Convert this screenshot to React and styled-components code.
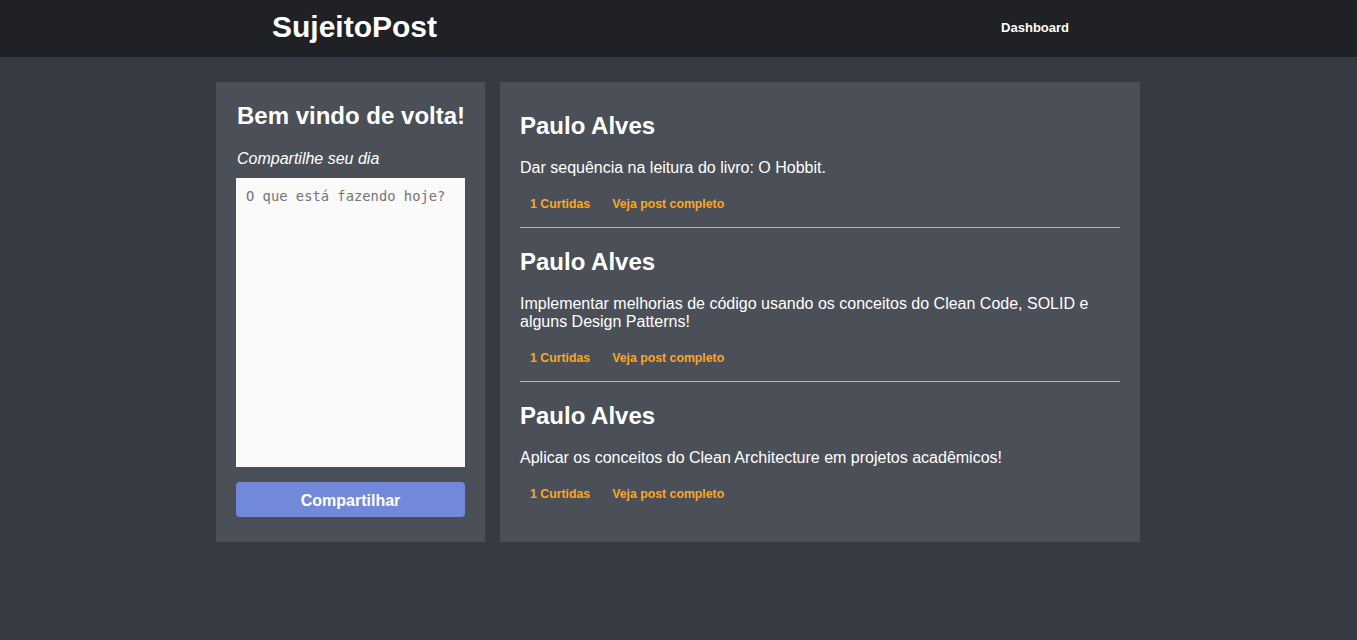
import React from 'react';
import styled, { createGlobalStyle } from 'styled-components';

const GlobalStyle = createGlobalStyle`
  * { box-sizing: border-box; }
  html, body { margin: 0; padding: 0; }
  body {
    background: #373a42;
    font-family: "Liberation Sans", Arial, sans-serif;
    color: #fff;
  }
`;

const Header = styled.header`
  height: 57px;
  background: #202124;
  display: flex;
  justify-content: center;
`;

const HeaderInner = styled.div`
  width: 813px;
  display: flex;
  align-items: center;
  justify-content: space-between;
  padding-bottom: 3px;
`;

const Logo = styled.a`
  font-size: 30px;
  font-weight: bold;
  color: #fff;
  text-decoration: none;
  line-height: 34px;
`;

const NavLink = styled.a`
  font-size: 13px;
  font-weight: bold;
  color: #fff;
  text-decoration: none;
  padding: 2px 16px 0;
  line-height: 16px;
`;

const Main = styled.main`
  display: grid;
  grid-template-columns: 269px 640px;
  gap: 15px;
  justify-content: center;
  margin-top: 25px;
  padding-right: 1px;
`;

const Panel = styled.section`
  background: #4b4f58;
  padding: ${p => p.$pad};
  display: flex;
  flex-direction: column;
`;

const Title = styled.h1`
  margin: 0;
  font-size: 24px;
  line-height: 24px;
  font-weight: bold;
  white-space: nowrap;
  padding-left: 1px;
`;

const Subtitle = styled.p`
  margin: 22px 0 0;
  font-size: 16px;
  font-style: italic;
  padding-left: 1px;
`;

const TextArea = styled.textarea`
  margin-top: 10px;
  height: 289px;
  width: 100%;
  border: none;
  outline: none;
  resize: none;
  background: #fafafa;
  padding: 10px;
  font-family: "DejaVu Sans Mono", monospace;
  font-size: 13.8px;
  color: #333;
  &::placeholder { color: #757575; }
`;

const Button = styled.button`
  margin-top: 15px;
  height: 35px;
  border: none;
  border-radius: 4px;
  background: #7289da;
  color: #fff;
  font-family: "Liberation Sans", Arial, sans-serif;
  font-size: 16px;
  font-weight: bold;
  padding: 2px 0 0;
  cursor: pointer;
`;

const Article = styled.article`
  padding: 20px 0 16px;
  border-bottom: 1px solid #b3b3b3;
  &:last-child { border-bottom: none; }
`;

const Name = styled.h2`
  margin: 0;
  font-size: 24px;
  line-height: 28px;
  font-weight: bold;
`;

const Text = styled.p`
  margin: 19px 0 0;
  font-size: 16px;
  line-height: 18px;
`;

const Actions = styled.div`
  margin-top: 20px;
  display: flex;
  gap: 22px;
  padding-left: 10px;
`;

const ActionLink = styled.a`
  font-size: 12.3px;
  line-height: 14px;
  font-weight: bold;
  color: #f9a825;
  text-decoration: none;
`;

const posts = [
  { id: 1, author: 'Paulo Alves', text: 'Dar sequência na leitura do livro: O Hobbit.', likes: 1 },
  { id: 2, author: 'Paulo Alves', text: 'Implementar melhorias de código usando os conceitos do Clean Code, SOLID e alguns Design Patterns!', likes: 1 },
  { id: 3, author: 'Paulo Alves', text: 'Aplicar os conceitos do Clean Architecture em projetos acadêmicos!', likes: 1 },
];

export default function App() {
  return (
    <>
      <GlobalStyle />
      <Header>
        <HeaderInner>
          <Logo href="#">SujeitoPost</Logo>
          <NavLink href="#">Dashboard</NavLink>
        </HeaderInner>
      </Header>
      <Main>
        <Panel $pad="22px 20px 25px">
          <Title>Bem vindo de volta!</Title>
          <Subtitle>Compartilhe seu dia</Subtitle>
          <TextArea placeholder="O que está fazendo hoje?" />
          <Button>Compartilhar</Button>
        </Panel>
        <Panel $pad="10px 20px 20px">
          {posts.map(p => (
            <Article key={p.id}>
              <Name>{p.author}</Name>
              <Text>{p.text}</Text>
              <Actions>
                <ActionLink href="#">{p.likes} Curtidas</ActionLink>
                <ActionLink href="#">Veja post completo</ActionLink>
              </Actions>
            </Article>
          ))}
        </Panel>
      </Main>
    </>
  );
}
